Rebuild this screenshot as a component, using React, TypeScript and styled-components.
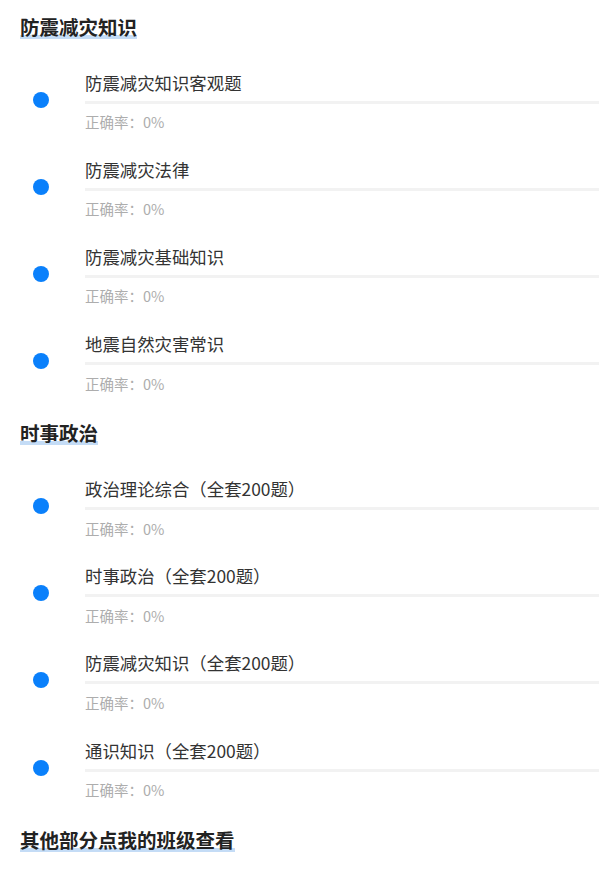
import React from "react";
import styled, { createGlobalStyle } from "styled-components";

const Global = createGlobalStyle`
  html, body { margin: 0; padding: 0; background: #ffffff; }
  body { font-family: "Noto Sans CJK SC", "Noto Sans", sans-serif; }
`;

const Page = styled.div`
  padding: 13.5px 0 40px 20px;
  display: flex;
  flex-direction: column;
`;

const Section = styled.section`
  display: flex;
  flex-direction: column;
  margin-bottom: 26.5px;
`;

const SectionTitle = styled.h2`
  align-self: flex-start;
  margin: 0 0 31px;
  font-size: 19.5px;
  line-height: 26px;
  font-weight: 700;
  color: #222;
  background: linear-gradient(
    to bottom,
    transparent 0,
    transparent 21px,
    #c4dcf6 21px,
    #c4dcf6 25px,
    transparent 25px
  );
`;

const List = styled.div`
  display: flex;
  flex-direction: column;
  gap: 25.7px;
`;

const Item = styled.div`
  display: flex;
  align-items: flex-start;
`;

const Dot = styled.span`
  flex: none;
  width: 16px;
  height: 16px;
  border-radius: 50%;
  background: #0a80fb;
  margin: 21px 36px 0 13px;
`;

const Body = styled.div`
  flex: 1;
  display: flex;
  flex-direction: column;
`;

const ItemTitle = styled.div`
  font-size: 17.4px;
  line-height: 24px;
  color: #333;
`;

const Track = styled.div`
  margin-top: 6px;
  height: 3px;
  background: #f2f2f2;
`;

const Fill = styled.div`
  height: 100%;
  background: #0a80fb;
`;

const Rate = styled.div`
  margin-top: 8.5px;
  font-size: 14.5px;
  line-height: 20px;
  color: #adadad;
`;

type Q = { name: string; rate: number };

const sections: { title: string; items: Q[] }[] = [
  {
    title: "防震减灾知识",
    items: [
      { name: "防震减灾知识客观题", rate: 0 },
      { name: "防震减灾法律", rate: 0 },
      { name: "防震减灾基础知识", rate: 0 },
      { name: "地震自然灾害常识", rate: 0 },
    ],
  },
  {
    title: "时事政治",
    items: [
      { name: "政治理论综合（全套200题）", rate: 0 },
      { name: "时事政治（全套200题）", rate: 0 },
      { name: "防震减灾知识（全套200题）", rate: 0 },
      { name: "通识知识（全套200题）", rate: 0 },
    ],
  },
];

export default function App() {
  return (
    <>
      <Global />
      <Page>
        {sections.map((s) => (
          <Section key={s.title}>
            <SectionTitle>{s.title}</SectionTitle>
            <List>
              {s.items.map((it) => (
                <Item key={it.name}>
                  <Dot />
                  <Body>
                    <ItemTitle>{it.name}</ItemTitle>
                    <Track>
                      <Fill style={{ width: `${it.rate}%` }} />
                    </Track>
                    <Rate>正确率：{it.rate}%</Rate>
                  </Body>
                </Item>
              ))}
            </List>
          </Section>
        ))}
        <SectionTitle>其他部分点我的班级查看</SectionTitle>
      </Page>
    </>
  );
}
